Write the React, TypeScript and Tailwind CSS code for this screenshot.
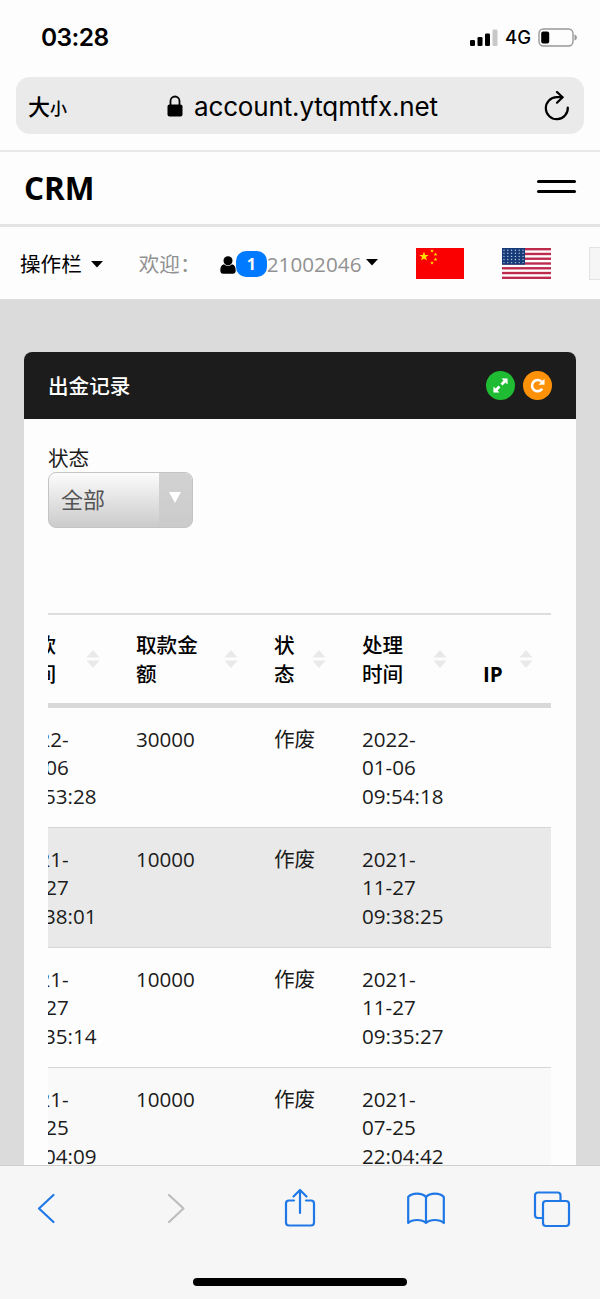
import type { ReactNode } from "react";

const rows = [
  { requested: ["2022-", "01-06", "09:53:28"], amount: "30000", status: "作废", handled: ["2022-", "01-06", "09:54:18"] },
  { requested: ["2021-", "11-27", "09:38:01"], amount: "10000", status: "作废", handled: ["2021-", "11-27", "09:38:25"] },
  { requested: ["2021-", "11-27", "09:35:14"], amount: "10000", status: "作废", handled: ["2021-", "11-27", "09:35:27"] },
  { requested: ["2021-", "07-25", "22:04:09"], amount: "10000", status: "作废", handled: ["2021-", "07-25", "22:04:42"] },
];

const rowColors = ["bg-[#fdfdfd]", "bg-[#e9e9e9]", "bg-[#fdfdfd]", "bg-[#f9f9f9]"];

export default function App() {
  return (
    <div className="flex h-[1299px] w-[600px] flex-col overflow-hidden bg-[#fdfdfd] font-['Open_Sans','Noto_Sans_CJK_SC',sans-serif] text-[20.6px] text-[#1b1b1b]">
      <StatusBar />
      <AddressBar />
      <Navbar />
      <UserBar />
      <main className="min-h-0 flex-1 overflow-hidden bg-[#dbdbdb] px-6 pt-[53px]">
        <RecordsCard />
      </main>
      <BrowserToolbar />
    </div>
  );
}

function StatusBar() {
  return (
    <div className="flex h-[77px] shrink-0 items-center justify-between pb-[2px] pl-[41px] pr-[22px] font-['Inter',sans-serif] text-black">
      <span className="text-[24.5px] font-semibold tracking-[-0.6px]">03:28</span>
      <div className="flex items-center">
        <svg width="28" height="18" viewBox="0 0 28 18">
          <rect x="0" y="11" width="5" height="6" rx="1.3" />
          <rect x="7.5" y="8" width="5" height="9" rx="1.3" />
          <rect x="15" y="4.5" width="5" height="12.5" rx="1.3" />
          <rect x="22.5" y="0.5" width="5" height="16.5" rx="1.3" fill="#c8c8c8" />
        </svg>
        <span className="ml-[7px] text-[18.5px] font-medium">4G</span>
        <svg className="ml-[7px]" width="40" height="20" viewBox="0 0 40 20">
          <rect x="1" y="1" width="34" height="17" rx="4.5" fill="none" stroke="#989898" strokeWidth="1.4" />
          <rect x="3.2" y="3.5" width="8" height="12" rx="2" />
          <path d="M36.5 6.500v6c1.6-.6 2.4-1.6 2.4-3s-.8-2.400-2.400-3z" fill="#989898" />
        </svg>
      </div>
    </div>
  );
}

function AddressBar() {
  return (
    <div className="h-[75px] shrink-0 border-b-2 border-[#e8e8e8] px-4">
      <div className="flex h-[57px] items-center rounded-[14px] bg-[#eaeaea] pl-3 pr-[14px] text-black">
        <div className="flex w-[139px] items-baseline font-['Noto_Sans_CJK_SC',sans-serif] font-medium">
          <span className="text-[22px]">大</span>
          <span className="text-[17px]">小</span>
        </div>
        <svg width="16" height="22" viewBox="0 0 16 22">
          <path d="M3.500 10V6a4.500 4.500 0 0 1 9 0v4" fill="none" stroke="currentColor" strokeWidth="1.8" />
          <rect x="0.500" y="9.500" width="15" height="12" rx="2" />
        </svg>
        <span className="ml-[11px] mt-px font-['Inter',sans-serif] text-[26px] tracking-[-0.150px]">account.ytqmtfx.net</span>
        <svg className="ml-auto" width="26" height="30" viewBox="0 0 26 30" fill="none" stroke="currentColor" strokeWidth="2.200" strokeLinecap="round" strokeLinejoin="round">
          <path d="M23.800 16.500A11 11 0 1 1 12.800 6.200h5.500" />
          <path d="M13 1l5.600 5.200L13 11.700" />
        </svg>
      </div>
    </div>
  );
}

function Navbar() {
  return (
    <header className="flex h-[75px] shrink-0 items-center justify-between border-b-[3px] border-[#e4e4e4] px-6">
      <h1 className="text-[31.500px] font-bold text-black">CRM</h1>
      <button className="mb-[3px] flex flex-col gap-[7px]">
        <span className="h-[3px] w-[39px] rounded-full bg-black" />
        <span className="h-[3px] w-[39px] rounded-full bg-black" />
      </button>
    </header>
  );
}

function Caret() {
  return (
    <svg width="12" height="7" viewBox="0 0 12 7">
      <path d="M0 0h12L6 6.500z" />
    </svg>
  );
}

function UserBar() {
  return (
    <div className="flex h-[72px] w-[680px] shrink-0 items-center whitespace-nowrap pl-[20px] pt-[3px] text-black">
      <span>操作栏</span>
      <span className="ml-[9px]"><Caret /></span>
      <span className="ml-[36px] w-[81px] text-[#919191]">欢迎：</span>
      <svg width="16" height="18" viewBox="0 0 16 18">
        <circle cx="8" cy="4.700" r="4.500" />
        <path d="M4 8.200c2.300 2 5.700 2 8 0 2.600.6 3.700 3 3.700 6 0 2.300-1 3.600-3 3.600H3.300c-2 0-3-1.300-3-3.600 0-3 1.100-5.400 3.700-6z" />
      </svg>
      <span className="mb-[2px] flex h-[26px] w-[31px] items-center justify-center rounded-[10px] bg-[#007bff] text-[16px] font-bold text-white">1</span>
      <span className="tracking-[0.060px] text-[#919191]">21002046</span>
      <span className="mb-1 ml-[5px]"><Caret /></span>
      <ChinaFlag />
      <UsaFlag />
      <span className="mb-[2px] ml-[38px] h-[33px] w-8 border border-[#e3e3e3] bg-[#f6f6f6]" />
    </div>
  );
}

function Star({ x, y, r }: { x: number; y: number; r: number }) {
  const points = Array.from({ length: 10 }, (_, i) => {
    const radius = i % 2 ? r * 0.4 : r;
    const angle = (Math.PI * i) / 5 - Math.PI / 2;
    return `${x + radius * Math.cos(angle)},${y + radius * Math.sin(angle)}`;
  });
  return <polygon points={points.join(" ")} />;
}

function ChinaFlag() {
  return (
    <svg className="mb-[2px] ml-[38px] shrink-0" width="48" height="31" viewBox="0 0 48 31">
      <rect width="48" height="31" fill="#fb0000" />
      <g fill="#ffe000">
        <Star x={8} y={8.500} r={5} />
        <Star x={16} y={3} r={2} />
        <Star x={19.500} y={6.500} r={2} />
        <Star x={19.500} y={11.500} r={2} />
        <Star x={16} y={15} r={2} />
      </g>
    </svg>
  );
}

function UsaFlag() {
  const stripe = 31 / 13;
  return (
    <svg className="mb-[2px] ml-[38px] shrink-0" width="49" height="31" viewBox="0 0 49 31">
      <rect width="49" height="31" fill="#fff" />
      {[0, 2, 4, 6, 8, 10, 12].map((n) => (
        <rect key={n} y={n * stripe} width="49" height={stripe} fill="#bd2b4d" />
      ))}
      <rect width="23" height={stripe * 7} fill="#173a78" />
      {[0, 1, 2, 3, 4].map((row) =>
        [0, 1, 2, 3, 4, 5].map((col) => (
          <circle key={`${row}-${col}`} cx={2 + col * 3.800} cy={2.200 + row * 3.100} r="0.700" fill="#b9c9e2" />
        )),
      )}
    </svg>
  );
}

function RecordsCard() {
  return (
    <section className="h-[900px] overflow-hidden rounded-lg bg-[#fdfdfd]">
      <div className="flex h-[67px] items-center justify-between bg-[#1c1c1c] px-6">
        <h2 className="mt-[2px] font-medium text-white">出金记录</h2>
        <div className="flex gap-2">
          <span className="flex size-[29px] items-center justify-center rounded-full bg-[#1fbb33]">
            <svg width="15" height="15" viewBox="0 0 15 15" fill="#fff" stroke="#fff">
              <path d="M8.500 6.500l4-4M2.500 12.500l4-4" strokeWidth="2.800" />
              <path d="M9 .7h5.300V6zM.7 9v5.300H6z" strokeWidth=".5" />
            </svg>
          </span>
          <span className="flex size-[29px] items-center justify-center rounded-full bg-[#fd9209]">
            <svg width="15" height="15" viewBox="0 0 15 15">
              <path d="M12.200 10.800A5.600 5.600 0 1 1 11.600 3.600" fill="none" stroke="#fff" strokeWidth="2.600" />
              <path d="M14.500 .8v6H8.500z" fill="#fff" />
            </svg>
          </span>
        </div>
      </div>
      <div className="px-6 pt-[25px]">
        <label className="block leading-[28px]">状态</label>
        <div className="flex h-[56px] w-[145px] overflow-hidden rounded-lg border border-[#c4c4c4] bg-linear-to-b from-[#fcfcfc] to-[#cbcbcb]">
          <span className="flex w-[110px] items-center pb-px pl-[12px] text-[22px] text-[#555]">全部</span>
          <span className="flex flex-1 items-center justify-center bg-linear-to-b from-[#d2d2d2] to-[#cbcbcb] pb-[5px] pr-px">
            <svg width="12" height="11" viewBox="0 0 12 11">
              <path d="M0 0h12L6 11z" fill="#fff" />
            </svg>
          </span>
        </div>
        <div className="mr-px mt-[85px] overflow-hidden">
          <RecordsTable />
        </div>
      </div>
    </section>
  );
}

function RecordsTable() {
  // shifted left: the table is scrolled to its last columns
  return (
    <table className="-ml-[50px] w-[554px] table-fixed border-separate border-spacing-0 text-left leading-[28.800px]">
      <colgroup>
        <col className="w-[121px]" />
        <col className="w-[138px]" />
        <col className="w-[88px]" />
        <col className="w-[121px]" />
        <col className="w-[86px]" />
      </colgroup>
      <thead>
        <tr className="h-[95px]">
          <HeadCell>取款<br />时间</HeadCell>
          <HeadCell>取款金<br />额</HeadCell>
          <HeadCell>状<br />态</HeadCell>
          <HeadCell>处理<br />时间</HeadCell>
          <HeadCell>IP</HeadCell>
        </tr>
      </thead>
      <tbody>
        {rows.map((row, i) => (
          <tr key={i} className={rowColors[i]}>
            <Cell><Lines lines={row.requested} /></Cell>
            <Cell>{row.amount}</Cell>
            <Cell>{row.status}</Cell>
            <Cell><Lines lines={row.handled} /></Cell>
            <Cell />
          </tr>
        ))}
      </tbody>
    </table>
  );
}

function HeadCell({ children }: { children: ReactNode }) {
  return (
    <th className="border-b-[5px] border-t-2 border-b-[#d9d9d9] border-t-[#dedede] pb-[14px] pl-[17px] pr-[19px] align-bottom font-medium text-black">
      <div className="flex items-end justify-between">
        <span className="whitespace-nowrap font-bold has-[br]:font-medium">{children}</span>
        <svg className="mb-[21px] shrink-0" width="14" height="18" viewBox="0 0 14 18" fill="#e9e9e9">
          <path d="M7 0l6.500 7.500H.5zM7 18l6.500-7.500H.5z" />
        </svg>
      </div>
    </th>
  );
}

function Cell({ children }: { children?: ReactNode }) {
  return <td className="h-[120px] border-b border-[#d6d6d6] pl-[17px] pt-[16.500px] align-top">{children}</td>;
}

function Lines({ lines }: { lines: string[] }) {
  return lines.map((line) => (
    <div key={line} className="whitespace-nowrap">{line}</div>
  ));
}

function BrowserToolbar() {
  return (
    <footer className="flex h-[134px] shrink-0 flex-col items-center justify-between border-t border-[#cfcfcf] bg-[#f6f6f6] pb-[13px] pt-[22px]">
      <div className="flex w-full justify-between pl-[27px] pr-[29px]">
        <ToolbarIcon color="text-[#1f78e6]"><path d="M26.500 7L12 20.500L26.500 34" /></ToolbarIcon>
        <ToolbarIcon color="text-[#bdbdbd]"><path d="M15 7l14.500 13.500L15 34" /></ToolbarIcon>
        <ToolbarIcon color="text-[#1f78e6]">
          <path d="M14 12.500H9a3 3 0 0 0-3 3v19a3 3 0 0 0 3 3h22a3 3 0 0 0 3-3v-19a3 3 0 0 0-3-3h-5" />
          <path d="M20 25V2M13.500 8.500L20 2l6.500 6.500" />
        </ToolbarIcon>
        <ToolbarIcon color="text-[#1f78e6]">
          <path d="M19 9C15 4.500 5 4.500 1.200 9v26c4.300-4 13.500-4 17.800 0 4.300-4 13.500-4 17.800 0V9C33 4.500 23 4.500 19 9zv26" />
        </ToolbarIcon>
        <ToolbarIcon color="text-[#1f78e6]">
          <path d="M10 30H5a3 3 0 0 1-3-3V7.500a3 3 0 0 1 3-3h19.500a3 3 0 0 1 3 3V13" />
          <rect x="10" y="13" width="26" height="25" rx="3" />
        </ToolbarIcon>
      </div>
      <div className="h-[8px] w-[214px] rounded-full bg-black" />
    </footer>
  );
}

function ToolbarIcon({ color, children }: { color: string; children: ReactNode }) {
  return (
    <svg className={color} width="38" height="40" viewBox="0 0 38 40" fill="none" stroke="currentColor" strokeWidth="2.200" strokeLinecap="round" strokeLinejoin="round">
      {children}
    </svg>
  );
}
